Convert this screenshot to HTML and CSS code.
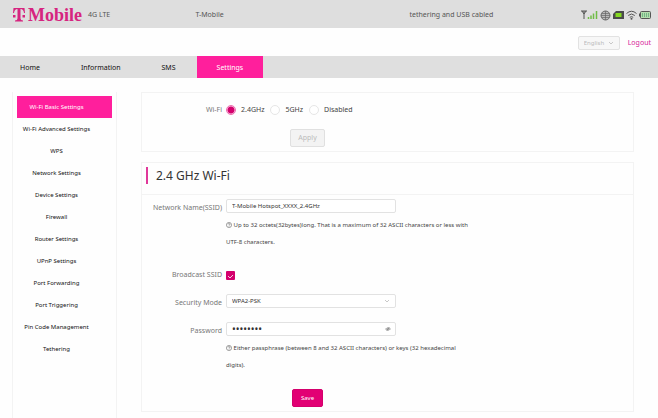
FILE: index.html
```html
<!DOCTYPE html>
<html lang="en">
<head>
  <meta charset="UTF-8">
  <meta name="viewport" content="width=device-width, initial-scale=1">
  <title>Wi-Fi Basic Settings</title>
  <link rel="stylesheet" href="styles.css">
</head>
<body>
  <header class="topbar">
    <div class="brand">
      <svg class="brand-mark" viewBox="0 0 24 28" aria-hidden="true">
        <path d="M1 0h22l1 10h-2q-1-8-7-8v19q0 4 5 4v2H4v-2q5 0 5-4V2Q3 2 2 10H0z"/>
        <path d="M0 14h5v5H0zM19 14h5v5h-5z"/>
      </svg>
      <span class="brand-name">Mobile</span>
      <span class="network-type">4G LTE</span>
    </div>
    <div>T-Mobile</div>
    <div>tethering and USB cabled</div>
    <div class="status-icons">
      <svg width="17" height="10" viewBox="0 0 17 10">
        <path d="M0 1h6M3 1v8M1 1l2 3 2-3" fill="none" stroke="#555"/>
        <path d="M7.500 7v2M10 5.500v3.500M12.500 3.500v5.500M15.500 1v8" fill="none" stroke="#6fbd45" stroke-width="1.500"/>
      </svg>
      <svg width="11" height="11" viewBox="0 0 11 11">
        <circle cx="5.500" cy="5.500" r="4.500" fill="#bbb" stroke="#666"/>
        <path d="M1 5.500h9M5.500 1v9M2 3.500h7M2 7.500h7" fill="none" stroke="#666" stroke-width=".7"/>
      </svg>
      <svg width="11" height="8" viewBox="0 0 11 8">
        <path d="M3 0h8v8H0V3z" fill="#4b4b4b"/>
        <rect x="2.500" y="2" width="6" height="4" fill="#84d820"/>
      </svg>
      <svg width="11" height="10" viewBox="0 0 11 10">
        <path d="M.5 3.500q5-4.500 10 0M2.200 5.500q3.300-3 6.600 0M3.800 7.300q1.700-1.300 3.400 0" fill="none" stroke="#555"/>
        <circle cx="5.500" cy="8.700" r="1" fill="#555"/>
      </svg>
      <svg width="12" height="8" viewBox="0 0 12 8">
        <rect x="1.500" y=".5" width="10" height="7" rx="1" fill="#b4dcae" stroke="#555"/>
        <path d="M0 2.500h1v3H0z" fill="#555"/>
        <path d="M3.500 2v4M5.500 2v4M7.500 2v4M9.500 2v4" stroke="#72b785" fill="none"/>
      </svg>
    </div>
  </header>

  <div class="userbar">
    <select class="language" aria-label="Language" disabled>
      <option>English</option>
    </select>
    <a class="logout" href="#">Logout</a>
  </div>

  <nav class="main-nav">
    <a href="#">Home</a>
    <a href="#">Information</a>
    <a href="#">SMS</a>
    <a class="active" href="#">Settings</a>
  </nav>

  <div class="page">
    <nav class="side-nav">
      <a class="active" href="#">Wi-Fi Basic Settings</a>
      <a href="#">Wi-Fi Advanced Settings</a>
      <a href="#">WPS</a>
      <a href="#">Network Settings</a>
      <a href="#">Device Settings</a>
      <a href="#">Firewall</a>
      <a href="#">Router Settings</a>
      <a href="#">UPnP Settings</a>
      <a href="#">Port Forwarding</a>
      <a href="#">Port Triggering</a>
      <a href="#">Pin Code Management</a>
      <a href="#">Tethering</a>
    </nav>

    <main class="content">
      <form class="panel band-form">
        <div class="form-row">
          <span class="label" id="band-label">Wi-Fi</span>
          <div class="radios" role="radiogroup" aria-labelledby="band-label">
            <label><input type="radio" name="band" checked>2.4GHz</label>
            <label><input type="radio" name="band">5GHz</label>
            <label><input type="radio" name="band">Disabled</label>
          </div>
        </div>
        <button type="submit" class="btn" disabled>Apply</button>
      </form>

      <form class="panel wifi-form">
        <h1>2.4 GHz Wi-Fi</h1>
        <div class="form-row">
          <label class="label" for="ssid">Network Name(SSID)</label>
          <input class="field" type="text" id="ssid" value="T-Mobile Hotspot_XXXX_2.4GHz">
          <p class="help">
            <svg viewBox="0 0 10 10"><circle cx="5" cy="5" r="4.300"/><path d="M3.500 4q0-1.500 1.500-1.500T6.500 4Q6.500 5 5 5.500V6M5 7v1"/></svg>
            Up to 32 octets(32bytes)long. That is a maximum of 32 ASCII characters or less with UTF-8 characters.
          </p>
        </div>
        <div class="form-row broadcast">
          <label class="label" for="broadcast">Broadcast SSID</label>
          <input type="checkbox" id="broadcast" checked>
        </div>
        <div class="form-row">
          <label class="label" for="security">Security Mode</label>
          <select class="field" id="security">
            <option>WPA2-PSK</option>
          </select>
        </div>
        <div class="form-row password">
          <label class="label" for="password">Password</label>
          <div class="field-wrap">
            <input class="field" type="password" id="password" value="password">
            <button type="button" class="reveal" aria-label="Show password">
              <svg viewBox="0 0 12 10"><path d="M1 5q5-6 10 0-5 6-10 0zM3 9l6-8"/><circle cx="6" cy="5" r="1.500"/></svg>
            </button>
          </div>
          <p class="help">
            <svg viewBox="0 0 10 10"><circle cx="5" cy="5" r="4.300"/><path d="M3.500 4q0-1.500 1.500-1.500T6.500 4Q6.500 5 5 5.500V6M5 7v1"/></svg>
            Either passphrase (between 8 and 32 ASCII characters) or keys (32 hexadecimal digits).
          </p>
        </div>
        <button type="submit" class="btn primary">Save</button>
      </form>
    </main>
  </div>
</body>
</html>
```
FILE: styles.css
```css
* {
  box-sizing: border-box;
}
body {
  font-family: "Noto Sans", "Open Sans", sans-serif;
  font-size: 7px;
  line-height: 10px;
  margin: 0;
  min-height: 100vh;
  display: flex;
  flex-direction: column;
  background: #fefefe;
  color: #222;
}
a {
  color: inherit;
  text-decoration: none;
}
input,
select,
button {
  font: inherit;
  margin: 0;
}

/* top bar */
.topbar {
  display: grid;
  grid-template-columns: 184fr 216fr 173fr auto;
  align-items: center;
  height: 28px;
  padding: 2px 7px 0 13px;
  background: #dedede;
  color: #555;
}
.brand {
  display: flex;
  align-items: center;
}
.brand-mark {
  width: 12px;
  height: 14px;
  fill: #d6247f;
}
.brand-name {
  margin-left: 3px;
  font-family: "Liberation Serif", serif;
  font-size: 18px;
  line-height: 20px;
  font-weight: bold;
  color: #d6247f;
}
.network-type {
  margin-left: 6px;
}
.status-icons {
  display: flex;
  align-items: center;
  gap: 2px;
}

/* language + logout */
.userbar {
  display: flex;
  justify-content: flex-end;
  align-items: center;
  gap: 8px;
  height: 28px;
  padding: 2px 7px 0 0;
}
select {
  appearance: none;
  background: #fff url("data:image/svg+xml,%3Csvg xmlns='http://www.w3.org/2000/svg' viewBox='0 0 6 4'%3E%3Cpath d='M1 1l2 2 2-2' fill='none' stroke='%23bbb' stroke-width='.8'/%3E%3C/svg%3E") no-repeat right 5px center / 6px 4px;
}
.language {
  width: 42px;
  height: 14px;
  padding: 0 5px;
  border: 1px solid #e2e2e2;
  border-radius: 2px;
  background-color: #f7f7f7;
  color: #bbb;
  font-size: 6px;
  opacity: 1;
}
.logout {
  color: #d6249a;
}

/* main navigation */
.main-nav {
  display: flex;
  gap: 1px;
  height: 22px;
  background: #dfdfdf;
  line-height: 24px;
  color: #111;
}
.main-nav a {
  padding: 0 20px;
}
.main-nav .active,
.side-nav .active {
  background: #ff1f9c;
  color: #fff;
}

.page {
  flex: 1;
  display: flex;
  padding: 14px 24px 0 12px;
}

/* side navigation */
.side-nav {
  flex: 0 0 105px;
  padding: 4px;
  border: 1px solid #f3f3f3;
  border-width: 0 1px;
  font-size: 6px;
  color: #111;
}
.side-nav a {
  display: block;
  padding-right: 16px;
  line-height: 22px;
  text-align: center;
}

/* settings panels */
.content {
  flex: 1;
  min-width: 0;
  margin-left: 24px;
}
.panel {
  border: 1px solid #f3f3f3;
}
.form-row {
  display: grid;
  grid-template-columns: 80px 1fr;
  column-gap: 4px;
  align-items: center;
  padding-right: 160px;
}
.label {
  text-align: right;
  color: #777;
}
.wifi-form .label {
  padding-top: 4px;
}
.band-form {
  height: 60px;
  padding-top: 12px;
  margin-bottom: 10px;
}
.radios {
  display: flex;
  gap: 6px;
  color: #444;
}
.radios label {
  display: flex;
  align-items: center;
  gap: 5px;
}
input[type="radio"] {
  appearance: none;
  width: 10px;
  height: 10px;
  border: 1px solid #e6e6e6;
  border-radius: 50%;
  background: #fff;
}
input[type="radio"]:checked {
  border-color: #ee6cb0;
  background: radial-gradient(circle, #d4006d 3px, #fbd9ea 4px);
}
.btn {
  display: block;
  width: 35px;
  height: 18px;
  margin-left: 148px;
  padding: 0;
  border: 1px solid #e0e0e0;
  border-radius: 2px;
  background: #f3f3f3;
  color: #bbb;
}
.band-form .btn {
  margin-top: 14px;
}

h1 {
  display: flex;
  align-items: center;
  height: 32px;
  margin: 0 0 4px;
  padding: 0 4px 6px;
  border-bottom: 1px solid #f3f3f3;
  font-size: 12px;
  font-weight: normal;
  line-height: 17px;
  color: #333;
}
h1::before {
  content: "";
  width: 2px;
  height: 17px;
  margin-right: 8px;
  background: #e0389a;
}
.field {
  width: 170px;
  height: 14px;
  padding: 0 5px;
  border: 1px solid #e2e2e2;
  border-radius: 2px;
  background-color: #fff;
  color: #333;
  font-size: 6px;
}
.help {
  grid-column: 2;
  margin: 4px 0 0;
  font-size: 6px;
  line-height: 17px;
  color: #444;
}
.help svg,
.reveal svg {
  width: 6px;
  height: 6px;
  vertical-align: -1px;
  fill: none;
  stroke: #666;
}
.broadcast {
  margin: 19px 0 14px;
}
.wifi-form .broadcast .label {
  padding-top: 0;
}
input[type="checkbox"] {
  appearance: none;
  width: 9px;
  height: 9px;
  border-radius: 1px;
  background: #d4006d url("data:image/svg+xml,%3Csvg xmlns='http://www.w3.org/2000/svg' viewBox='0 0 9 9'%3E%3Cpath d='M2 5l2 2 3-3' fill='none' stroke='%23fff' stroke-width='.8'/%3E%3C/svg%3E");
}
.password {
  margin-top: 14px;
}
.field-wrap {
  position: relative;
  display: flex;
  width: 170px;
}
#password {
  font-size: 10px;
}
.reveal {
  position: absolute;
  right: 4px;
  top: 2px;
  width: 8px;
  height: 10px;
  padding: 0;
  border: 0;
  background: none;
  line-height: 8px;
}
.wifi-form .btn {
  width: 31px;
  margin: 15px 0 4px 150px;
  border-color: #d4006d;
  background: #e20074;
  color: #fff;
  font-size: 6px;
}
```
